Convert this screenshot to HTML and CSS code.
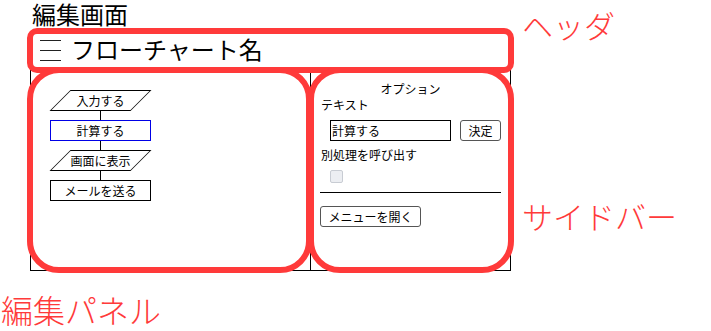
FILE: index.html
```html
<!DOCTYPE html>
<html lang="ja">
<head>
<meta charset="utf-8">
<title>編集画面</title>
<link rel="stylesheet" href="styles.css">
</head>
<body>
<div class="page">
  <h1 class="title">編集画面</h1>
  <header class="topbar">
    <svg class="menu-icon" width="21" height="21" viewBox="0 0 21 21" aria-hidden="true"><path d="M0 0.5H21M0 10.5H21M0 20.5H21" stroke="#222" stroke-width="1" fill="none"/></svg>
    <span class="chart-name">フローチャート名</span>
  </header>
  <div class="workspace">
    <section class="editor">
      <div class="flow">
        <div class="node io"><span>入力する</span></div>
        <div class="edge"></div>
        <div class="node process selected"><span>計算する</span></div>
        <div class="edge"></div>
        <div class="node io"><span>画面に表示</span></div>
        <div class="edge"></div>
        <div class="node process"><span>メールを送る</span></div>
      </div>
    </section>
    <aside class="sidebar">
      <div class="opt-title">オプション</div>
      <div class="label">テキスト</div>
      <div class="text-row">
        <input class="text-input" type="text" value="計算する">
        <button class="btn ok-btn">決定</button>
      </div>
      <div class="label call-label">別処理を呼び出す</div>
      <span class="checkbox"></span>
      <hr class="sep">
      <button class="btn menu-btn">メニューを開く</button>
    </aside>
  </div>
</div>
<div class="annotations">
  <div class="frame frame-header"></div>
  <div class="frame frame-editor"></div>
  <div class="frame frame-sidebar"></div>
  <div class="note note-header">ヘッダ</div>
  <div class="note note-sidebar">サイドバー</div>
  <div class="note note-editor">編集パネル</div>
</div>
</body>
</html>
```
FILE: styles.css
```css
html, body {
  margin: 0;
  padding: 0;
  background: #fff;
}
body {
  font-family: "Noto Sans CJK JP", "Noto Sans", sans-serif;
  color: #000;
  width: 711px;
  height: 331px;
  overflow: hidden;
  position: relative;
}
.page {
  padding-left: 30px;
  width: 481px;
}
.title {
  margin: 0 0 2px 0;
  padding-left: 2px;
  font-size: 24px;
  line-height: 28px;
  font-weight: normal;
}
.topbar {
  height: 40px;
  display: flex;
  align-items: center;
  gap: 10px;
  padding-left: 10px;
}
.menu-icon {
  display: block;
  flex: none;
}
.chart-name {
  font-size: 24px;
  line-height: 24px;
  margin-top: -3px;
}
.workspace {
  display: grid;
  grid-template-columns: 280px 199px;
  height: 201px;
  box-sizing: border-box;
  border: 1px solid #000;
}
.editor {
  border-right: 1px solid #000;
  padding: 19px 0 0 19px;
}
.flow {
  width: 101px;
  display: flex;
  flex-direction: column;
}
.node {
  box-sizing: border-box;
  width: 101px;
  height: 21px;
  display: flex;
  align-items: center;
  justify-content: center;
  font-size: 12px;
  line-height: 14px;
  position: relative;
  isolation: isolate;
}
.node span {
  position: relative;
  z-index: 1;
}
.process {
  border: 1px solid #000;
}
.process.selected {
  border-color: #0000e6;
}
.io::before {
  content: "";
  position: absolute;
  top: 0;
  bottom: 0;
  left: 10px;
  right: 10px;
  border: 1px solid #000;
  transform: skewX(-45deg);
  background: #fff;
  z-index: 0;
}
.edge {
  width: 1px;
  height: 9px;
  background: #000;
  margin-left: 50px;
}
.sidebar {
  padding: 10px 10px 0 10px;
  font-size: 12px;
  display: flex;
  flex-direction: column;
  align-items: flex-start;
}
.opt-title {
  align-self: stretch;
  text-align: center;
  line-height: 16px;
}
.label {
  line-height: 16px;
}
.text-row {
  display: flex;
  gap: 9px;
  margin-top: 7px;
  padding-left: 9px;
}
.text-input {
  box-sizing: border-box;
  width: 121px;
  height: 21px;
  border: 1px solid #000;
  border-radius: 0;
  padding: 0 1px;
  margin: 0;
  font-family: inherit;
  font-size: 12px;
  color: #000;
  outline: none;
}
.btn {
  box-sizing: border-box;
  height: 21px;
  padding: 0;
  margin: 0;
  border: 1px solid #555;
  border-radius: 3px;
  background: #fff;
  font-family: inherit;
  font-size: 12px;
  line-height: 14px;
  color: #000;
}
.ok-btn {
  width: 41px;
}
.call-label {
  margin-top: 6px;
}
.checkbox {
  display: block;
  box-sizing: border-box;
  width: 13px;
  height: 13px;
  margin: 7px 0 0 9px;
  border: 1px solid #c8ccd3;
  border-radius: 2px;
  background: #eceef2;
}
.sep {
  box-sizing: border-box;
  width: 181px;
  height: 1px;
  margin: 9px 0 0 -1px;
  border: 0;
  background: #000;
}
.menu-btn {
  width: 101px;
  margin: 13px 0 0 -1px;
}

/* annotation overlay */
.annotations {
  position: absolute;
  inset: 0;
  pointer-events: none;
}
.frame {
  position: absolute;
  box-sizing: border-box;
  border: 6px solid #ff3a3a;
}
.frame-header {
  left: 27px;
  top: 28px;
  width: 487px;
  height: 45px;
  border-radius: 10px;
}
.frame-editor {
  left: 27px;
  top: 67px;
  width: 285px;
  height: 206px;
  border-radius: 32px;
}
.frame-sidebar {
  left: 308px;
  top: 67px;
  width: 206px;
  height: 206px;
  border-radius: 32px;
}
.note {
  position: absolute;
  color: #ff3a3a;
  font-size: 31px;
  line-height: 31px;
  font-weight: 300;
  white-space: nowrap;
}
.note-header {
  left: 522px;
  top: 9px;
}
.note-sidebar {
  left: 522px;
  top: 200px;
}
.note-editor {
  left: 1px;
  top: 293px;
  font-size: 32px;
  line-height: 32px;
}
```
